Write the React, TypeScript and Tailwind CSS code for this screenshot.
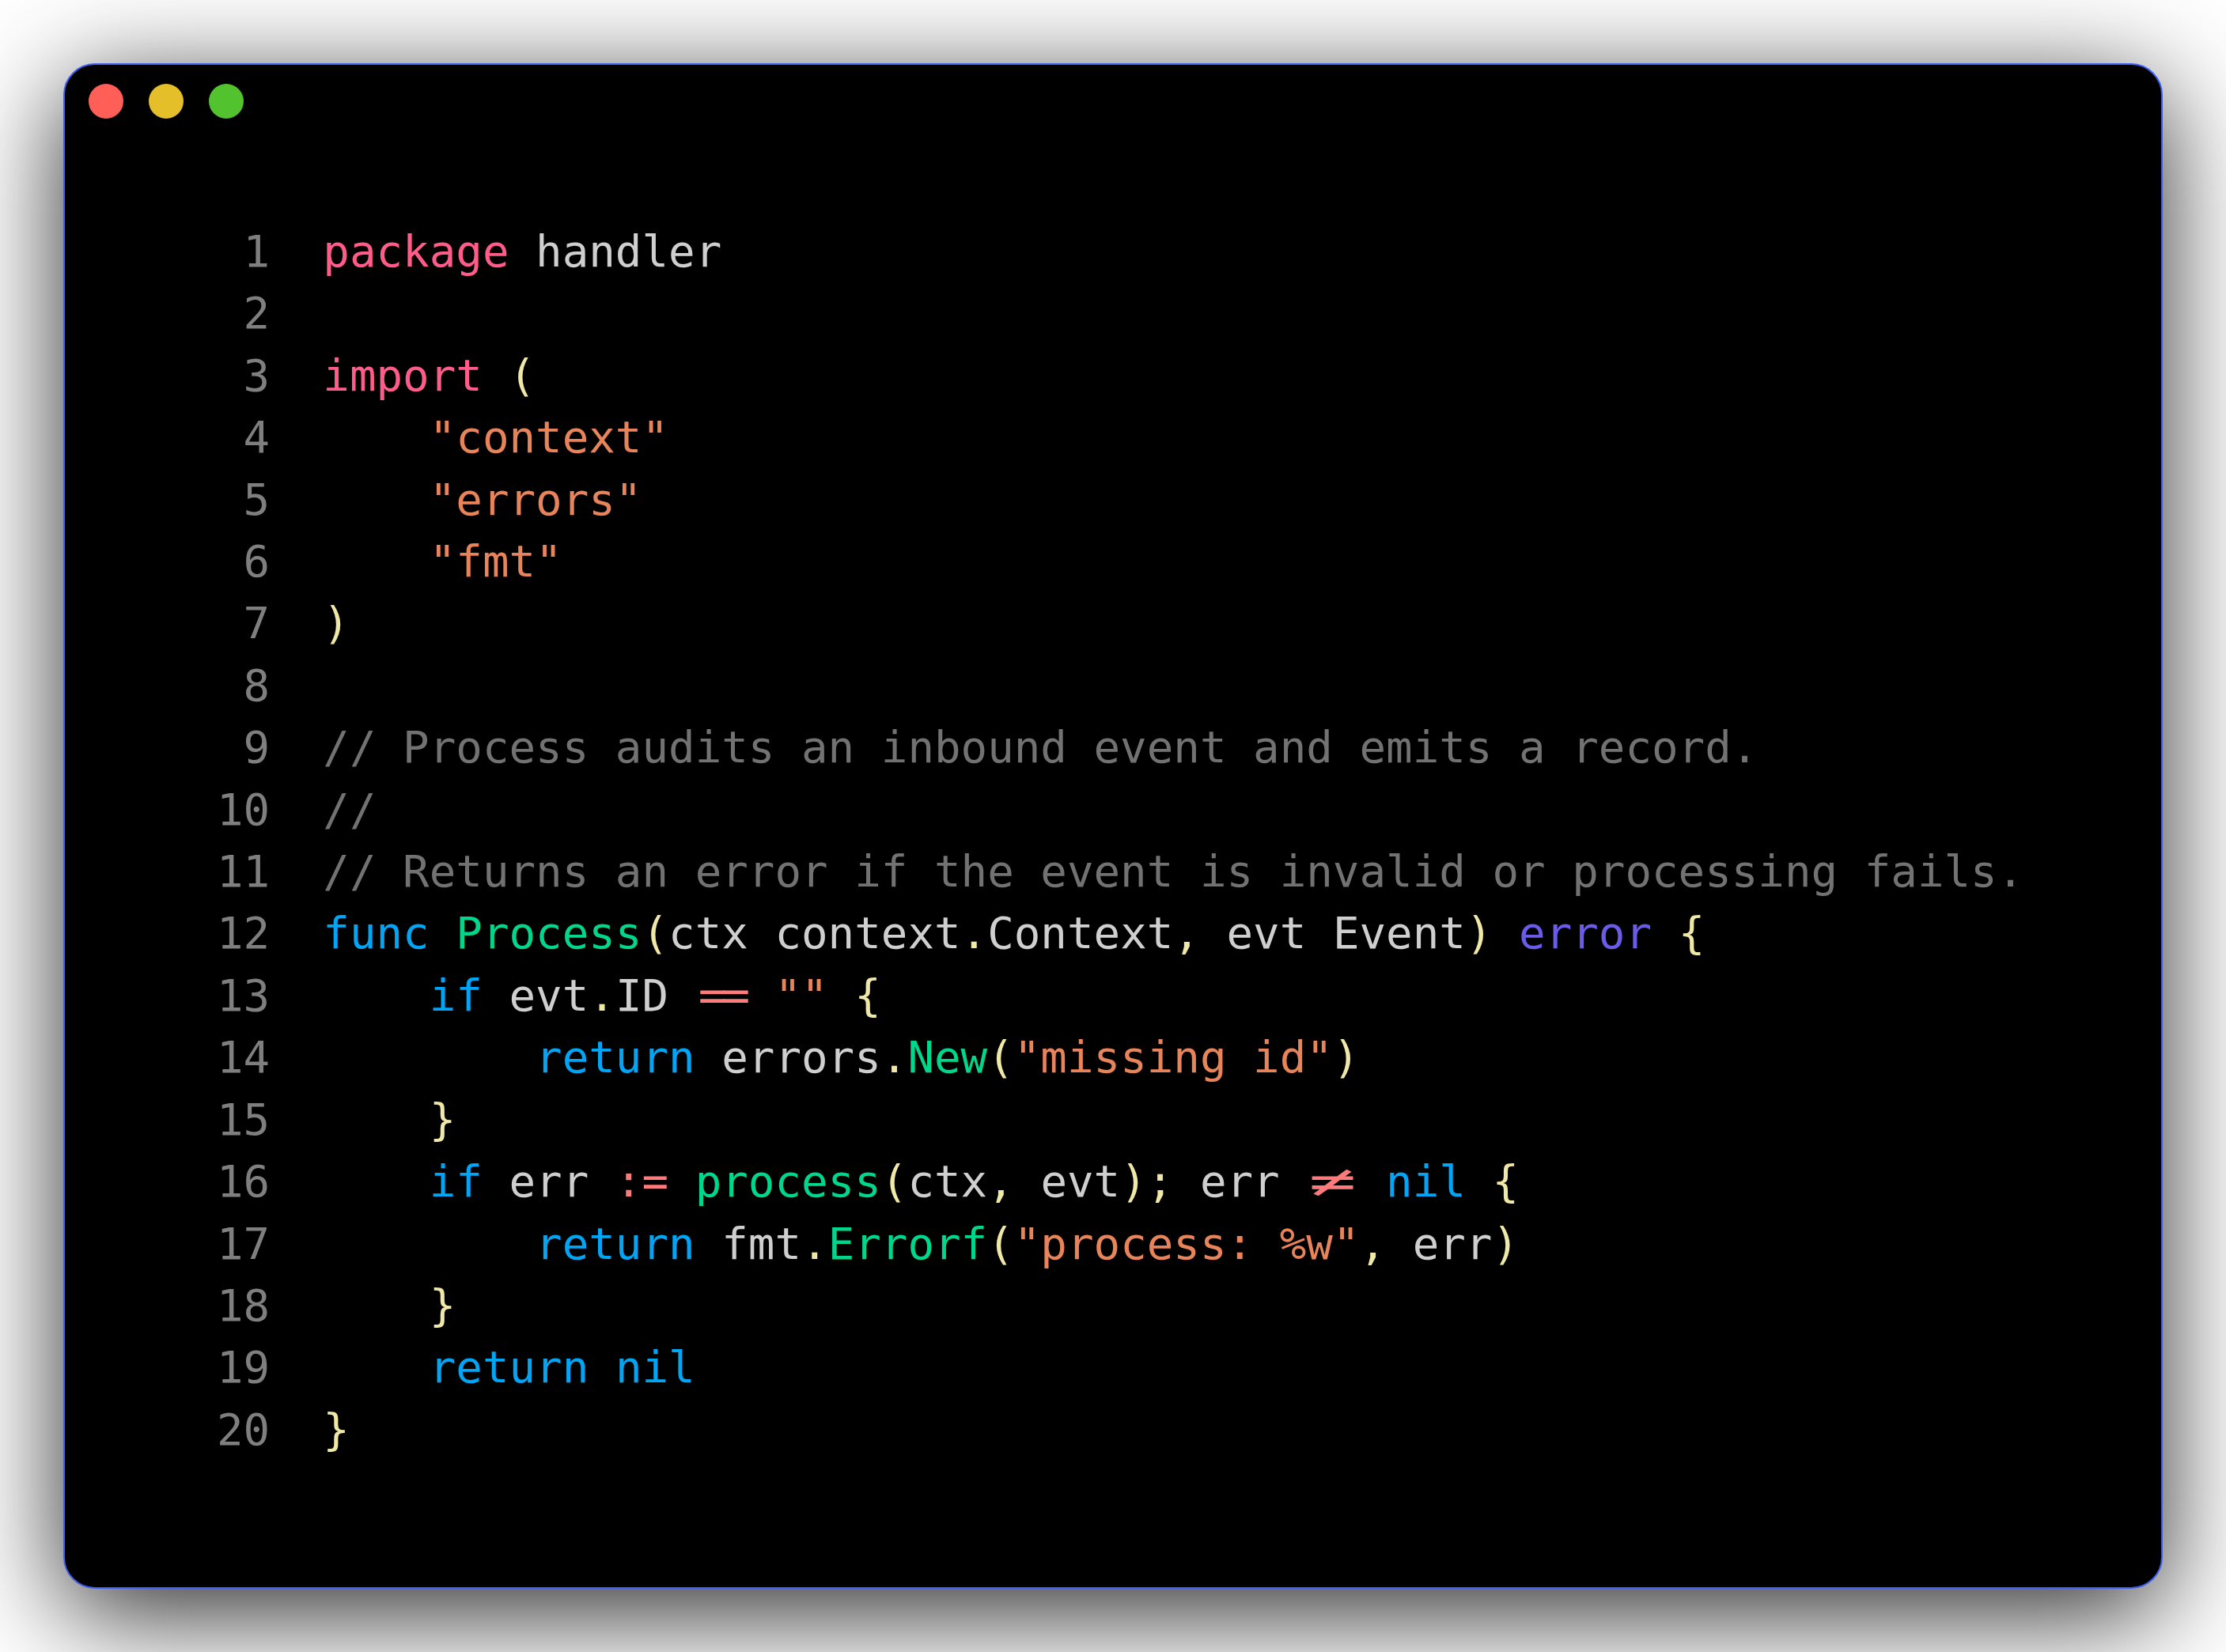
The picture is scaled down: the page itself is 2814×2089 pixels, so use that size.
import React from "react";

type Tok = [string, string];

const C = {
  id: "text-[#cfcfcf]",
  pink: "text-[#ff5c8a]",
  str: "text-[#e8845a]",
  punc: "text-[#efe8a6]",
  com: "text-[#727272]",
  blue: "text-[#00a6f5]",
  green: "text-[#00d68c]",
  purple: "text-[#6a5ce8]",
  op: "text-[#ff7b7b]",
  sp: "",
};

const lines: Tok[][] = [
  [["pink", "package"], ["sp", " "], ["id", "handler"]],
  [],
  [["pink", "import"], ["sp", " "], ["punc", "("]],
  [["sp", "    "], ["str", '"context"']],
  [["sp", "    "], ["str", '"errors"']],
  [["sp", "    "], ["str", '"fmt"']],
  [["punc", ")"]],
  [],
  [["com", "// Process audits an inbound event and emits a record."]],
  [["com", "//"]],
  [["com", "// Returns an error if the event is invalid or processing fails."]],
  [
    ["blue", "func"], ["sp", " "], ["green", "Process"], ["punc", "("], ["id", "ctx context"], ["punc", "."],
    ["id", "Context"], ["punc", ","], ["id", " evt Event"], ["punc", ")"], ["sp", " "], ["purple", "error"],
    ["sp", " "], ["punc", "{"],
  ],
  [
    ["sp", "    "], ["blue", "if"], ["sp", " "], ["id", "evt"], ["punc", "."], ["id", "ID"], ["sp", " "],
    ["eq", "=="], ["sp", " "], ["str", '""'], ["sp", " "], ["punc", "{"],
  ],
  [
    ["sp", "        "], ["blue", "return"], ["sp", " "], ["id", "errors"], ["punc", "."], ["green", "New"],
    ["punc", "("], ["str", '"missing id"'], ["punc", ")"],
  ],
  [["sp", "    "], ["punc", "}"]],
  [
    ["sp", "    "], ["blue", "if"], ["sp", " "], ["id", "err"], ["sp", " "], ["op", ":="], ["sp", " "],
    ["green", "process"], ["punc", "("], ["id", "ctx"], ["punc", ","], ["sp", " "], ["id", "evt"], ["punc", ")"],
    ["punc", ";"], ["sp", " "], ["id", "err"], ["sp", " "], ["ne", "!="], ["sp", " "], ["blue", "nil"], ["sp", " "],
    ["punc", "{"],
  ],
  [
    ["sp", "        "], ["blue", "return"], ["sp", " "], ["id", "fmt"], ["punc", "."], ["green", "Errorf"],
    ["punc", "("], ["str", '"process: %w"'], ["punc", ","], ["sp", " "], ["id", "err"], ["punc", ")"],
  ],
  [["sp", "    "], ["punc", "}"]],
  [["sp", "    "], ["blue", "return"], ["sp", " "], ["blue", "nil"]],
  [["punc", "}"]],
];

function Token({ t }: { t: Tok }) {
  const [kind, text] = t;
  if (kind === "eq") {
    return (
      <span className="inline-block w-[2ch] text-center text-[#ff7b7b] tracking-[-0.12em]">
        <span className="inline-block scale-x-[1.08]">==</span>
      </span>
    );
  }
  if (kind === "ne") {
    return (
      <span className="inline-block w-[2ch] text-center text-[#ff7b7b]">
        <span className="inline-block scale-x-[1.8]">≠</span>
      </span>
    );
  }
  const cls = (C as Record<string, string>)[kind] ?? "";
  return <span className={cls}>{text}</span>;
}

export default function App() {
  return (
    <div className="w-[2814px] h-[2089px] bg-white p-[80px] box-border">
      <div className="w-full h-full box-border rounded-[40px] border-2 border-[#3d5ef0] bg-black shadow-[0_30px_136px_rgba(0,0,0,0.85)] flex flex-col">
        <div className="flex gap-[32px] pt-[24px] pl-[30px]">
          <div className="w-[44px] h-[44px] rounded-full bg-[#ff5f57]" />
          <div className="w-[44px] h-[44px] rounded-full bg-[#e5bf2a]" />
          <div className="w-[44px] h-[44px] rounded-full bg-[#53c22f]" />
        </div>
        <div
          className="mt-[129px] pl-[192px] text-[55.8px] leading-[78.4px] whitespace-pre"
          style={{ fontFamily: '"DejaVu Sans Mono", "Liberation Mono", monospace' }}
        >
          {lines.map((toks, i) => (
            <div key={i} className="flex">
              <span className="inline-block w-[2ch] text-right text-[#7f7f7f]">{i + 1}</span>
              <span className="ml-[2ch]">
                {toks.map((t, j) => (
                  <Token key={j} t={t} />
                ))}
              </span>
            </div>
          ))}
        </div>
      </div>
    </div>
  );
}
